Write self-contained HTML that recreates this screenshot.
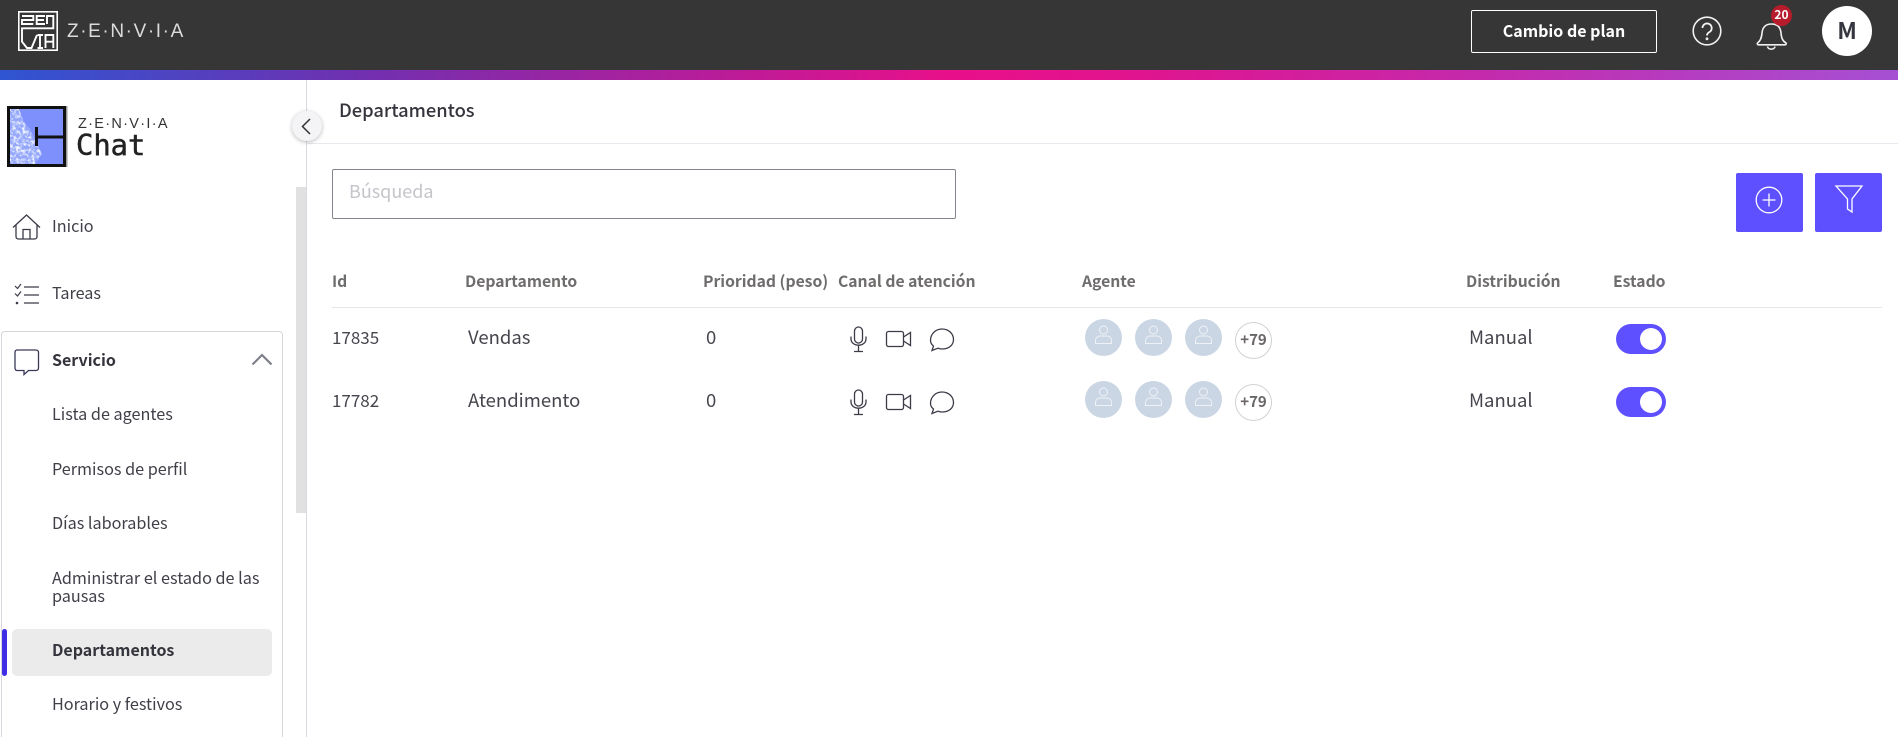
<!DOCTYPE html>
<html lang="es"><head><meta charset="utf-8"><title>Departamentos</title>
<style>
*{box-sizing:border-box}
html,body{margin:0;padding:0;width:1898px;height:737px;overflow:hidden;background:#fff}
body{position:relative;font-family:"Noto Sans CJK JP","Liberation Sans",sans-serif;color:#3a3a44}
.a{position:absolute}
.t{position:absolute;white-space:nowrap;line-height:20px;height:20px}
.nav{font-size:16.200px;color:#3f3f48;margin-top:-1px}
.th{font-size:15.700px;font-weight:700;color:#6f6c6c;margin-top:1px}
.td{font-size:18.500px;color:#45454d;margin-top:-1px}
.n{font-size:17px}
.av{position:absolute;width:37px;height:37px;border-radius:50%;background:#cbd6e4}
.more{position:absolute;width:37px;height:37px;border-radius:50%;border:1px solid #d2d2d2;background:#fff;text-align:center;line-height:34px;font-size:15px;font-weight:700;color:#6a6666}
.tg{position:absolute;left:1616px;width:50px;height:30px;border-radius:15px;background:#5f50ff}
.tg i{position:absolute;left:24px;top:4px;width:22px;height:22px;border-radius:50%;background:#fff}
svg{position:absolute;overflow:visible}
</style></head><body>
<div class="a" style="left:0;top:0;width:1898px;height:70px;background:#363636"></div>
<div class="a" style="left:0;top:70px;width:1898px;height:10px;background:linear-gradient(90deg,#2f55d2 0%,#7030b0 19%,#e8108a 50%,#e0148e 60%,#c42aac 78%,#a650d4 100%)"></div>

<svg style="left:18px;top:11px" width="40" height="40" viewBox="0 0 40 40" fill="none" stroke="#fff" stroke-width="2">
<rect x=".8" y=".8" width="38.400" height="38.400" stroke-width="1.600"/>
<path d="M4 5H15.300V9H4V13H15.300M27 5H18.700V13H27M18.700 9H26M29 13V5H35.300V17.300H4V30.700L9 37H13.500L19 24M22 24V37M19.500 24H25M19.500 37H25M27.500 37V24H35.300V37M27.500 30.700H35.300" stroke-width="1.900"/>
</svg>
<div class="t" style="left:67px;top:22px;font:400 19px/20px 'Liberation Sans',sans-serif;color:#dcdcdc;letter-spacing:1.600px;height:20px">Z·E·N·V·I·A</div>

<div class="a" style="left:1471px;top:10px;width:186px;height:43px;border:1px solid #fff;border-radius:2px;color:#fff;font-weight:700;font-size:16px;text-align:center;line-height:38px">Cambio de plan</div>
<svg style="left:1692px;top:16px" width="30" height="30" viewBox="0 0 30 30" fill="none" stroke="#f2f2f2" stroke-width="1.600"><circle cx="15" cy="15" r="13.800"/><path d="M10.500 12a4.600 4.600 0 1 1 7 4c-1.700 1-2.500 1.800-2.500 3.500" stroke-width="1.800"/><circle cx="15" cy="22.800" r=".6"/></svg>
<svg style="left:1756px;top:16px" width="32" height="36" viewBox="0 0 32 36" fill="none" stroke="#f0f0f0" stroke-width="1.600"><path d="M1.500 27c3-2 4-5 4.500-10 .6-6 4-9 9.500-9s9 3 9.500 9c.5 5 1.500 8 5 10 .5.800 0 1.800-1 1.800H2.500c-1 0-1.500-1-1-1.800z"/><path d="M11.500 30.500c.5 3.500 7 3.500 7.500 0"/></svg>
<div class="a" style="left:1771px;top:5px;width:21px;height:21px;border-radius:50%;background:#b71c2c;color:#fff;font-size:12px;font-weight:700;text-align:center;line-height:19px">20</div>
<div class="a" style="left:1822px;top:6px;width:50px;height:50px;border-radius:50%;background:#fff;color:#363640;font-size:23px;font-weight:700;text-align:center;line-height:46px">M</div>

<div class="a" style="left:306px;top:80px;width:1px;height:657px;background:#d8d8e0"></div>
<div class="a" style="left:306px;top:143px;width:1592px;height:1px;background:#e8e8ee"></div>
<div class="a" style="left:296px;top:187px;width:10px;height:326px;background:#e1e1e1"></div>

<svg style="left:7px;top:106px" width="60" height="61" viewBox="0 0 60 61">
<defs>
<filter id="sp" x="0" y="0" width="100%" height="100%"><feTurbulence type="fractalNoise" baseFrequency=".32" numOctaves="2" seed="7"/><feColorMatrix values="0 0 0 0 .9  0 0 0 0 .93  0 0 0 0 1  3.500 0 0 0 -1.500"/></filter>
<clipPath id="cl"><path d="M3 3H12L17 16L23 23L29 36L35 48L28 58H3Z"/></clipPath>
</defs>
<rect x="0" y="0" width="59" height="61" fill="#111"/>
<rect x="59" y="0" width="1.500" height="61" fill="#999"/>
<rect x="3" y="3" width="53" height="55" fill="#7d90fb"/>
<path d="M3 3H12L17 16L23 23L29 36L35 48L28 58H3Z" fill="#93a6fb"/>
<rect x="3" y="3" width="35" height="55" filter="url(#sp)" clip-path="url(#cl)"/>
<path d="M29 31H56" stroke="#111" stroke-width="3"/>
<path d="M29.500 21V40" stroke="#111" stroke-width="3"/>
</svg>
<div class="t" style="left:78px;top:114px;font:400 14.500px/20px 'Liberation Sans',sans-serif;color:#333;letter-spacing:1.300px">Z·E·N·V·I·A</div>
<div class="t" style="left:76px;top:130px;font:400 28.800px/30px 'DejaVu Sans Mono',monospace;color:#222;height:30px;-webkit-text-stroke:.5px #222">Chat</div>

<div class="a" style="left:292px;top:111px;width:30px;height:30px;border-radius:50%;background:#f4f4f6;box-shadow:0 1px 4px rgba(0,0,0,.28)"></div>
<svg style="left:292px;top:111px" width="30" height="30" fill="none" stroke="#333" stroke-width="1.500"><path d="M18 8L10.500 15.500 18 23"/></svg>

<svg style="left:12px;top:214px" width="30" height="26" viewBox="0 0 30 26" fill="none" stroke="#3a3a48" stroke-width="1.300"><path d="M1 13.500L14.500 1 28 13.500M4 11V22.500c0 1.500 1 2.500 2.500 2.500h16c1.500 0 2.500-1 2.500-2.500V11M11 25V15.500h7V25"/></svg>
<div class="t nav" style="left:52px;top:216px">Inicio</div>
<svg style="left:14px;top:283px" width="26" height="22" viewBox="0 0 26 22" fill="none" stroke="#3a3a48" stroke-width="1.200"><path d="M1 3l2.500 2.500L7 1M1 10.500L3.500 13 7 8.500M10 4H25M10 12H25M10 20H25"/><circle cx="3" cy="20" r="1.300" fill="#3a3a48" stroke="none"/></svg>
<div class="t nav" style="left:52px;top:283px">Tareas</div>

<div class="a" style="left:1px;top:331px;width:282px;height:420px;border:1px solid #d6d6dc;border-radius:4px"></div>
<svg style="left:14px;top:349px" width="26" height="26" viewBox="0 0 26 26" fill="none" stroke="#3a3a58" stroke-width="1.300"><path d="M3 1H22c1.500 0 2.500 1 2.500 2.500V19c0 1.500-1 2.500-2.500 2.500H14.500L10 25.500V21.500H3c-1.200 0-2-1-2-2.500V3.500C1 2 1.800 1 3 1z"/></svg>
<div class="t nav" style="left:52px;top:350px;font-weight:700;color:#34343c;font-size:16px">Servicio</div>
<svg style="left:251px;top:353px" width="22" height="14" fill="none" stroke="#7d8088" stroke-width="2.200"><path d="M1.500 11.500L11 2l9.500 9.500"/></svg>

<div class="t nav" style="left:52px;top:404px">Lista de agentes</div>
<div class="t nav" style="left:52px;top:459px">Permisos de perfil</div>
<div class="t nav" style="left:52px;top:513px">Días laborables</div>
<div class="t nav" style="left:52px;top:568px">Administrar el estado de las</div>
<div class="t nav" style="left:52px;top:586px">pausas</div>
<div class="a" style="left:12px;top:629px;width:260px;height:47px;background:#ebebeb;border-radius:5px"></div>
<div class="a" style="left:2px;top:629px;width:5px;height:47px;background:#3f2ee6;border-radius:3px"></div>
<div class="t nav" style="left:52px;top:640px;font-weight:700;color:#34343c;font-size:16px">Departamentos</div>
<div class="t nav" style="left:52px;top:694px">Horario y festivos</div>

<div class="t" style="left:339px;top:100px;font-size:18.300px;font-weight:500;color:#34343c">Departamentos</div>
<div class="a" style="left:332px;top:169px;width:624px;height:50px;border:1px solid #85858f;border-radius:2px"></div>
<div class="t" style="left:349px;top:181px;font-size:18px;color:#c4c4ca">Búsqueda</div>

<div class="a" style="left:1736px;top:173px;width:67px;height:59px;background:#5f50ff;border-radius:2px"></div>
<div class="a" style="left:1815px;top:173px;width:67px;height:59px;background:#5f50ff;border-radius:2px"></div>
<svg style="left:1755px;top:186px" width="28" height="28" fill="none" stroke="#fff" stroke-width="1.300"><circle cx="14" cy="14" r="12.800"/><path d="M14 7.500V20.500M7.500 14H20.500"/></svg>
<svg style="left:1834px;top:184px" width="30" height="30" fill="none" stroke="#fff" stroke-width="1.300"><path d="M2 2H28L18 15V28L13.500 25V15Z"/></svg>

<div class="t th" style="left:332px;top:270px">Id</div>
<div class="t th" style="left:465px;top:270px">Departamento</div>
<div class="t th" style="left:703px;top:270px">Prioridad (peso)</div>
<div class="t th" style="left:838px;top:270px">Canal de atención</div>
<div class="t th" style="left:1082px;top:270px">Agente</div>
<div class="t th" style="left:1466px;top:270px">Distribución</div>
<div class="t th" style="left:1613px;top:270px">Estado</div>
<div class="a" style="left:332px;top:307px;width:1550px;height:1px;background:#e6e6ea"></div>

<div class="t td n" style="left:332px;top:328px">17835</div>
<div class="t td" style="left:468px;top:328px">Vendas</div>
<div class="t td" style="left:706px;top:328px">0</div>
<div class="t td" style="left:1469px;top:328px">Manual</div>
<div class="t td n" style="left:332px;top:391px">17782</div>
<div class="t td" style="left:468px;top:391px">Atendimento</div>
<div class="t td" style="left:706px;top:391px">0</div>
<div class="t td" style="left:1469px;top:391px">Manual</div>

<svg style="left:850px;top:326px" width="110" height="28" fill="none" stroke="#3c3c48" stroke-width="1.300"><rect x="4.500" y="1" width="8" height="16" rx="4"/><path d="M1 10.500v2.500c0 3.500 3.200 6.200 7.500 6.200s7.500-2.700 7.500-6.200v-2.500M8.500 19.200V25.500M4 25.500H13"/><rect x="36.500" y="5.500" width="17" height="15" rx="2"/><path d="M53.500 11L60.500 6.500V19.500L53.500 15"/><path d="M82 24.500l1.500-4.500c-2-1.500-3-3.500-3-5.500C80.500 8 85.500 3 92 3s11.500 4.500 11.500 10.500S98.500 23 92 23c-1.500 0-3-.2-4-.8z"/></svg>
<svg style="left:850px;top:389px" width="110" height="28" fill="none" stroke="#3c3c48" stroke-width="1.300"><rect x="4.500" y="1" width="8" height="16" rx="4"/><path d="M1 10.500v2.500c0 3.500 3.200 6.200 7.500 6.200s7.500-2.700 7.500-6.200v-2.500M8.500 19.200V25.500M4 25.500H13"/><rect x="36.500" y="5.500" width="17" height="15" rx="2"/><path d="M53.500 11L60.500 6.500V19.500L53.500 15"/><path d="M82 24.500l1.500-4.500c-2-1.500-3-3.500-3-5.500C80.500 8 85.500 3 92 3s11.500 4.500 11.500 10.500S98.500 23 92 23c-1.500 0-3-.2-4-.8z"/></svg>

<div class="av" style="left:1085px;top:319px"></div><div class="av" style="left:1135px;top:319px"></div><div class="av" style="left:1185px;top:319px"></div>
<div class="av" style="left:1085px;top:381px"></div><div class="av" style="left:1135px;top:381px"></div><div class="av" style="left:1185px;top:381px"></div>
<svg style="left:1085px;top:319px" width="137" height="100" fill="none" stroke="#eef2f7" stroke-width="1">
<g><circle cx="18.500" cy="11" r="4"/><path d="M10.500 24.500v-3c0-2.500 2-4.500 4.500-4.500h7c2.500 0 4.500 2 4.500 4.500v3z"/></g>
<g transform="translate(50 0)"><circle cx="18.500" cy="11" r="4"/><path d="M10.500 24.500v-3c0-2.500 2-4.500 4.500-4.500h7c2.500 0 4.500 2 4.500 4.500v3z"/></g>
<g transform="translate(100 0)"><circle cx="18.500" cy="11" r="4"/><path d="M10.500 24.500v-3c0-2.500 2-4.500 4.500-4.500h7c2.500 0 4.500 2 4.500 4.500v3z"/></g>
<g transform="translate(0 62)"><circle cx="18.500" cy="11" r="4"/><path d="M10.500 24.500v-3c0-2.500 2-4.500 4.500-4.500h7c2.500 0 4.500 2 4.500 4.500v3z"/></g>
<g transform="translate(50 62)"><circle cx="18.500" cy="11" r="4"/><path d="M10.500 24.500v-3c0-2.500 2-4.500 4.500-4.500h7c2.500 0 4.500 2 4.500 4.500v3z"/></g>
<g transform="translate(100 62)"><circle cx="18.500" cy="11" r="4"/><path d="M10.500 24.500v-3c0-2.500 2-4.500 4.500-4.500h7c2.500 0 4.500 2 4.500 4.500v3z"/></g>
</svg>
<div class="more" style="left:1235px;top:322px">+79</div>
<div class="more" style="left:1235px;top:384px">+79</div>

<div class="tg" style="top:324px"><i></i></div>
<div class="tg" style="top:387px"><i></i></div>
</body></html>
